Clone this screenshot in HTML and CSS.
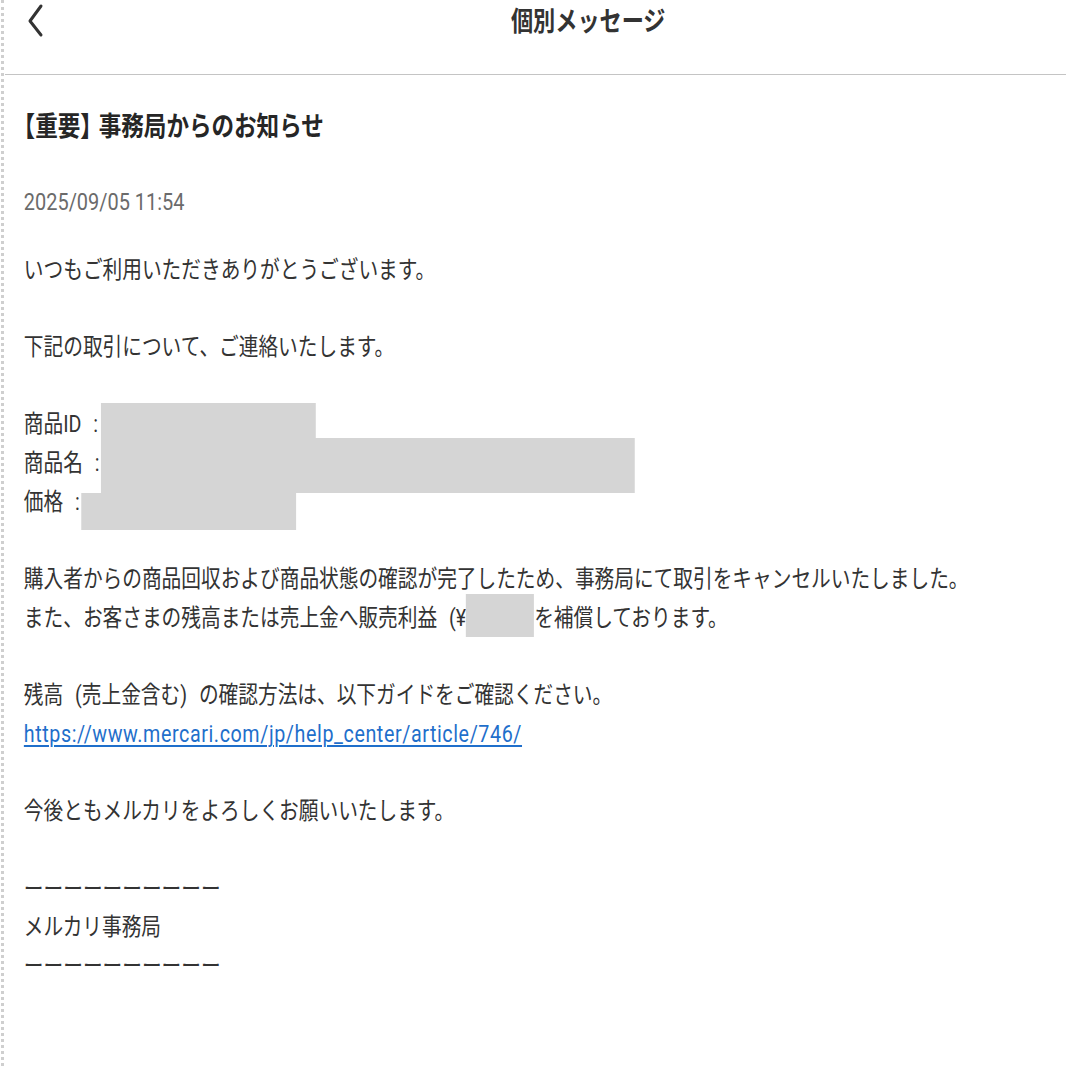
FILE: index.html
```html
<!DOCTYPE html>
<html lang="ja">
<head>
<meta charset="utf-8">
<title>個別メッセージ</title>
<link rel="stylesheet" href="styles.css">
</head>
<body>
<div class="frame">
  <header class="topbar">
    <div class="back">
      <svg width="24" height="40" viewBox="0 0 24 40" aria-hidden="true">
        <path d="M16 5 L5 20 L16 34" fill="none" stroke="#333" stroke-width="3" stroke-linecap="round" stroke-linejoin="round"/>
      </svg>
    </div>
    <div class="bar-title"><span class="squeeze-c">個別メッセージ</span></div>
  </header>
  <main class="content">
    <h1 class="subject"><span class="half">【</span>重要<span class="half">】</span> 事務局からのお知らせ</h1>
    <div class="date">2025/09/05 11:54</div>
    <div class="body">
      <p>いつもご利用いただきありがとうございます。</p>
      <p>下記の取引について、ご連絡いたします。</p>
      <p>商品ID :<span class="redact r-id"></span><br>商品名 :<span class="redact r-name"></span><br>価格 :<span class="redact r-price"></span></p>
      <p>購入者からの商品回収および商品状態の確認が完了したため、事務局にて取引をキャンセルいたしました。<br>また、お客さまの残高または売上金へ販売利益 (¥<span class="redact r-yen"></span>を補償しております。</p>
      <p>残高 (売上金含む) の確認方法は、以下ガイドをご確認ください。<br><a class="link" href="#">https://www.mercari.com/jp/help_center/article/746/</a></p>
      <p>今後ともメルカリをよろしくお願いいたします。</p>
      <p>ーーーーーーーーーー<br>メルカリ事務局<br>ーーーーーーーーーー</p>
    </div>
  </main>
</div>
</body>
</html>
```

FILE: styles.css
```css
html, body {
  margin: 0;
  padding: 0;
  background: #fff;
  overflow: hidden;
}
body {
  width: 1066px;
  height: 1066px;
  font-family: Roboto, "Noto Sans CJK JP", sans-serif;
  color: #333;
}
.frame {
  margin-left: 1px;
  border-left: 3px dotted #cfcfcf;
  height: 1066px;
  padding-left: 1px;
}
.topbar {
  display: grid;
  grid-template-columns: 50px 1fr;
  height: 74px;
  border-bottom: 1px solid #c4c4c4;
}
.back {
  padding-left: 20px;
  padding-top: 1px;
}
.back svg {
  display: block;
}
.bar-title {
  padding-left: 55px;
  text-align: center;
  font-size: 27px;
  font-weight: 700;
  line-height: 44px;
  color: #333;
}
.squeeze-c {
  display: inline-block;
  transform: scaleX(0.82);
  transform-origin: 50% 50%;
}
.content {
  width: 1250px;
  padding-left: 23px;
  transform: scaleX(0.82);
  transform-origin: 0 0;
  box-sizing: border-box;
}
.subject {
  margin: 32px 0 0;
  font-size: 27.5px;
  font-weight: 700;
  line-height: 40px;
  color: #262626;
  white-space: nowrap;
  word-spacing: 2px;
}
.half {
  font-feature-settings: "halt" 1;
}
.date {
  margin-top: 34.5px;
  font-size: 24.3px;
  line-height: 39px;
  color: #6b6b6b;
}
.body {
  margin-top: 30px;
  font-size: 24px;
  line-height: 38.7px;
  color: #333;
  white-space: nowrap;
  word-spacing: 8.5px;
}
.body p {
  margin: 0 0 38.7px;
}
.redact {
  display: inline-block;
  vertical-align: top;
  background: #d5d5d5;
}
.r-id {
  width: 262px;
  height: 35px;
  margin-left: 3px;
  margin-top: -2.6px;
  margin-bottom: 6.3px;
}
.r-name {
  width: 651px;
  height: 55px;
  margin-left: 2px;
  margin-top: -5.6px;
  margin-bottom: -10.7px;
}
.r-price {
  width: 262px;
  height: 37px;
  margin-left: 2px;
  margin-top: 10.4px;
  margin-bottom: -8.7px;
}
.r-yen {
  width: 83px;
  height: 43px;
  margin-top: -4.6px;
  margin-bottom: 0.3px;
}
.link {
  color: #1f6fcb;
  text-decoration: underline;
  text-decoration-thickness: 1.5px;
  text-underline-offset: 3px;
  letter-spacing: 0.72px;
}
```
